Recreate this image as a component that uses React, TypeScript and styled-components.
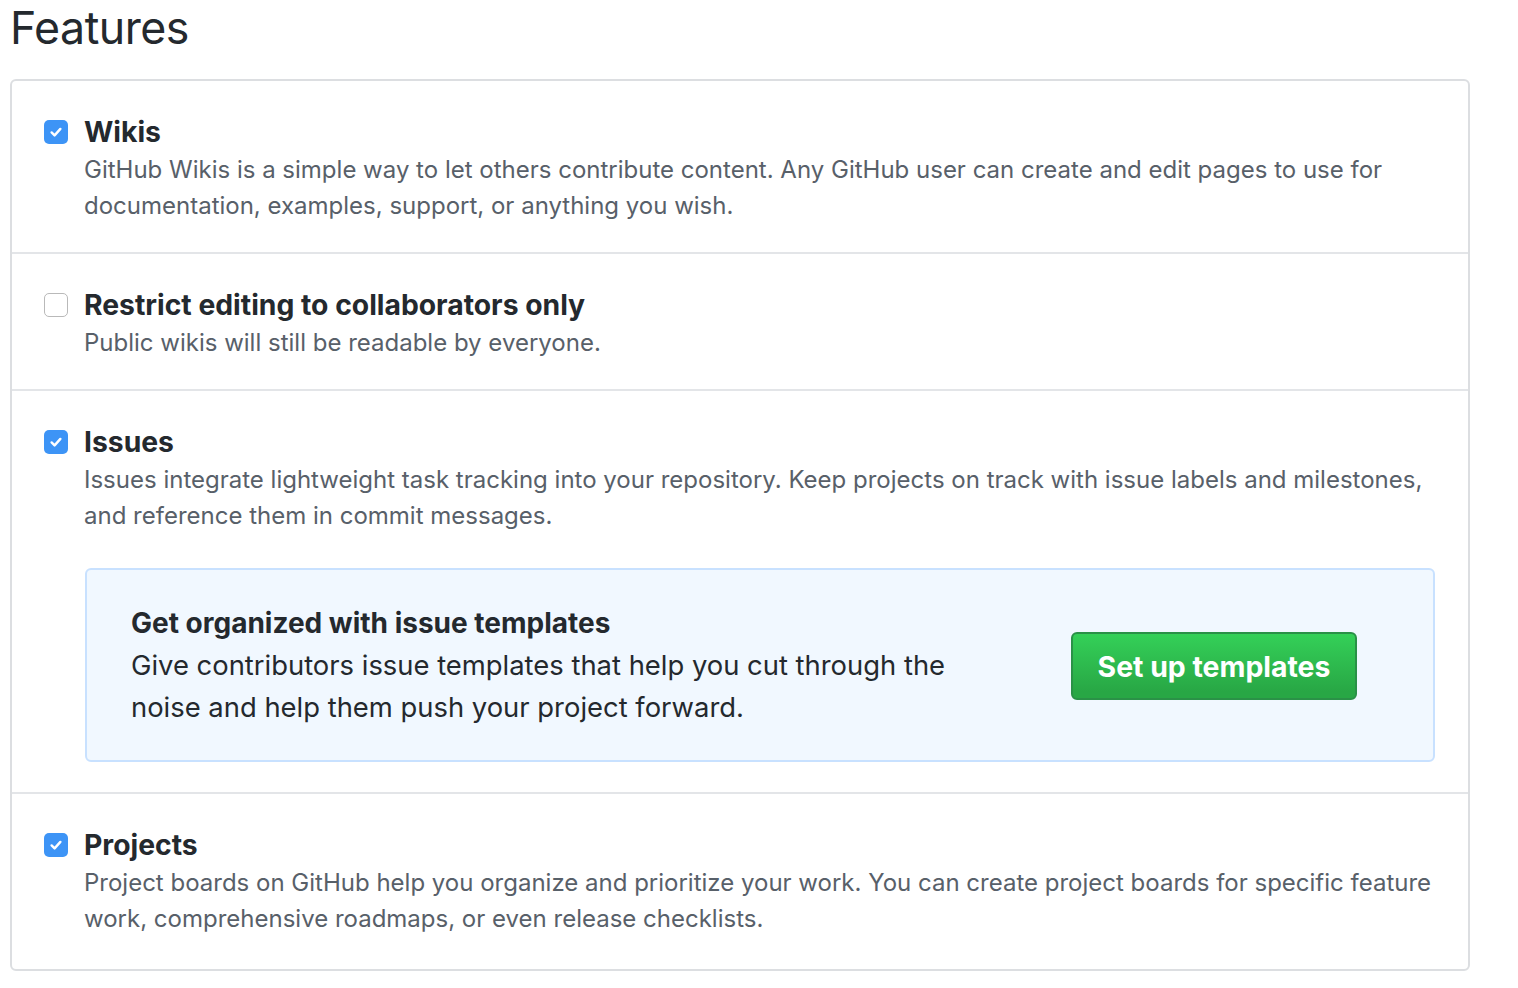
import styled, { createGlobalStyle } from "styled-components";

const GlobalStyle = createGlobalStyle`
  body {
    margin: 0;
    background: #fff;
    font-family: Inter, "Liberation Sans", sans-serif;
    color: #24292e;
  }
`;

const Page = styled.div`
  width: 1460px;
  padding: 0 0 0 10px;
`;

const Heading = styled.h2`
  margin: 0;
  height: 79px;
  font-size: 44.7px;
  font-weight: 400;
  line-height: 56px;
  letter-spacing: -0.5px;
`;

const Box = styled.div`
  border: 2px solid #dcdee1;
  border-radius: 6px;
`;

const Row = styled.div`
  display: flex;
  gap: 16px;
  padding: 33px 32px 28px 32px;
  border-top: 2px solid #e3e5e8;

  &:first-child {
    border-top: none;
  }

  &:last-child {
    padding-bottom: 32px;
  }
`;

const Check = styled.span<{ $on: boolean }>`
  flex: none;
  width: 24px;
  height: 24px;
  margin-top: 6px;
  box-sizing: border-box;
  border-radius: 5px;
  display: flex;
  align-items: center;
  justify-content: center;
  background: ${(p) => (p.$on ? "#3d94f6" : "#fff")};
  border: ${(p) => (p.$on ? "none" : "1.5px solid #b9b9b9")};
`;

const Body = styled.div`
  flex: 1;
`;

const Title = styled.div`
  font-size: 28.3px;
  font-weight: 700;
  line-height: 36px;
  margin-bottom: 2px;
`;

const Desc = styled.p`
  margin: 0;
  font-size: 24px;
  line-height: 36px;
  color: #586069;
`;

const Callout = styled.div`
  margin: 34px 1px 2px 1px;
  padding: 34px 76px 32px 44px;
  background: #f1f8ff;
  border: 2px solid #c8e1ff;
  border-radius: 6px;
  display: flex;
  align-items: center;
  justify-content: space-between;
`;

const CalloutText = styled.div`
  width: 840px;
`;

const CalloutTitle = styled.div`
  font-size: 28px;
  font-weight: 700;
  line-height: 38px;
`;

const CalloutDesc = styled.p`
  margin: 2px 0 0;
  font-size: 27.4px;
  line-height: 42px;
`;

const Button = styled.button`
  width: 286px;
  height: 68px;
  font-family: inherit;
  font-size: 28.4px;
  font-weight: 700;
  color: #fff;
  background: linear-gradient(#34d058, #28a745 90%);
  border: 2px solid #2a9147;
  border-radius: 6px;
`;

function CheckMark() {
  return (
    <svg width="16" height="16" viewBox="0 0 16 16">
      <path d="M3.6 8.4 L6.6 11.4 L12.4 4.9" fill="none" stroke="#fff" strokeWidth="2.4" strokeLinecap="round" strokeLinejoin="round" />
    </svg>
  );
}

function Feature(props: { on: boolean; title: string; children: React.ReactNode }) {
  return (
    <Row>
      <Check $on={props.on}>{props.on && <CheckMark />}</Check>
      <Body>
        <Title>{props.title}</Title>
        {props.children}
      </Body>
    </Row>
  );
}

export default function App() {
  return (
    <Page>
      <GlobalStyle />
      <Heading>Features</Heading>
      <Box>
        <Feature on title="Wikis">
          <Desc>
            GitHub Wikis is a simple way to let others contribute content. Any GitHub user can create and edit pages to use for
            documentation, examples, support, or anything you wish.
          </Desc>
        </Feature>
        <Feature on={false} title="Restrict editing to collaborators only">
          <Desc>Public wikis will still be readable by everyone.</Desc>
        </Feature>
        <Feature on title="Issues">
          <Desc>
            Issues integrate lightweight task tracking into your repository. Keep projects on track with issue labels and milestones,
            and reference them in commit messages.
          </Desc>
          <Callout>
            <CalloutText>
              <CalloutTitle>Get organized with issue templates</CalloutTitle>
              <CalloutDesc>
                Give contributors issue templates that help you cut through the noise and help them push your project forward.
              </CalloutDesc>
            </CalloutText>
            <Button>Set up templates</Button>
          </Callout>
        </Feature>
        <Feature on title="Projects">
          <Desc>
            Project boards on GitHub help you organize and prioritize your work. You can create project boards for specific feature
            work, comprehensive roadmaps, or even release checklists.
          </Desc>
        </Feature>
      </Box>
    </Page>
  );
}
